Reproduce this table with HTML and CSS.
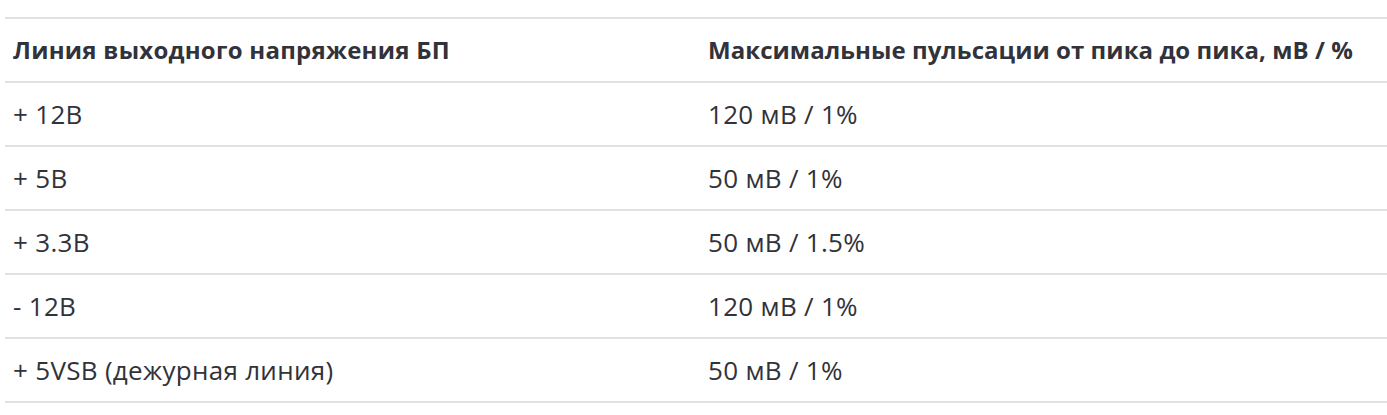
FILE: index.html
```html
<!DOCTYPE html>
<html lang="ru">
<head>
<meta charset="utf-8">
<link rel="stylesheet" href="styles.css">
</head>
<body>
<div class="wrap">
<table class="spec">
  <thead>
    <tr><th class="c1">Линия выходного напряжения БП</th><th class="c2">Максимальные пульсации от пика до пика, мВ / %</th></tr>
  </thead>
  <tbody>
    <tr><td>+ 12В</td><td>120 мВ / 1%</td></tr>
    <tr><td>+ 5В</td><td>50 мВ / 1%</td></tr>
    <tr><td>+ 3.3В</td><td>50 мВ / 1.5%</td></tr>
    <tr><td>- 12В</td><td>120 мВ / 1%</td></tr>
    <tr><td>+ 5VSB (дежурная линия)</td><td>50 мВ / 1%</td></tr>
  </tbody>
</table>
</div>
</body>
</html>
```
FILE: styles.css
```css
html, body {
  margin: 0;
  padding: 0;
  background: #ffffff;
  overflow: hidden;
}
.wrap {
  padding: 17px 0 0 5px;
}
.spec {
  width: 1382px;
  border-collapse: separate;
  border-spacing: 0;
  table-layout: fixed;
  font-family: "Open Sans", "Noto Sans", sans-serif;
  color: #32323a;
  border-bottom: 2px solid #dee2e6;
}
.spec th, .spec td {
  text-align: left;
  vertical-align: middle;
  border-top: 2px solid #dee2e6;
  padding: 16px 8px;
  line-height: 30px;
  white-space: nowrap;
}
.spec th {
  font-size: 24px;
  font-weight: 700;
  letter-spacing: 0.25px;
}
.spec th.c2 {
  letter-spacing: 0.05px;
}
.spec td {
  font-size: 26px;
  font-weight: 400;
  letter-spacing: 0.3px;
}
.spec .c1 {
  width: 679px;
}
```
